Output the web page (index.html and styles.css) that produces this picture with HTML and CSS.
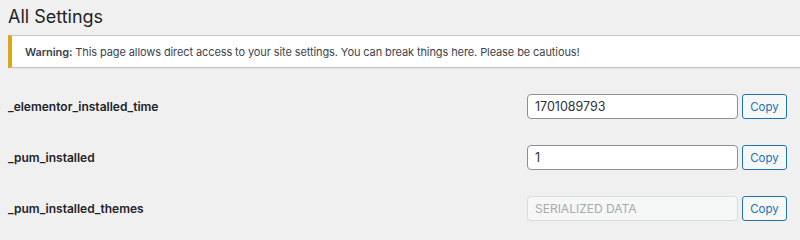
FILE: index.html
```html
<!DOCTYPE html>
<html>
<head>
<meta charset="utf-8">
<link rel="stylesheet" href="styles.css">
</head>
<body>
<div class="wrap">
  <h1 class="title">All Settings</h1>
  <div class="notice"><p><strong>Warning:</strong> This page allows direct access to your site settings. You can break things here. Please be cautious!</p></div>
  <div class="rows">
    <div class="row">
      <div class="label">_elementor_installed_time</div>
      <input class="field" type="text" value="1701089793">
      <button class="copy">Copy</button>
    </div>
    <div class="row">
      <div class="label">_pum_installed</div>
      <input class="field" type="text" value="1">
      <button class="copy">Copy</button>
    </div>
    <div class="row">
      <div class="label">_pum_installed_themes</div>
      <input class="field disabled" type="text" value="SERIALIZED DATA" disabled>
      <button class="copy">Copy</button>
    </div>
  </div>
</div>
</body>
</html>
```
FILE: styles.css
```css
html, body {
  margin: 0;
  padding: 0;
  background: #f0f0f1;
  overflow: hidden;
}
body {
  font-family: Inter, "Liberation Sans", sans-serif;
  color: #1d2327;
}
.wrap {
  padding: 0 0 0 8px;
}
.title {
  margin: 0;
  padding-top: 5px;
  font-size: 18px;
  font-weight: 400;
  line-height: 24px;
  color: #1d2327;
}
.notice {
  margin: 6px -20px 0 0;
  background: #fff;
  border: 1px solid #c3c4c7;
  border-left: 4px solid #dba617;
  box-shadow: 0 1px 1px rgba(0,0,0,.04);
  height: 31px;
  display: flex;
  align-items: center;
  padding-left: 13px;
}
.notice p {
  margin: 0;
  font-size: 11px;
  letter-spacing: -0.1px;
  color: #3c434a;
}
.notice strong {
  font-weight: 600;
}
.rows {
  padding-top: 26px;
  display: flex;
  flex-direction: column;
  gap: 26px;
}
.row {
  display: grid;
  grid-template-columns: 515px 211px 45px;
  column-gap: 4px;
  align-items: center;
  height: 25px;
}
.label {
  font-size: 12px;
  font-weight: 600;
  color: #1d2327;
}
.field {
  box-sizing: border-box;
  width: 211px;
  height: 25px;
  border: 1px solid #8c8f94;
  border-radius: 4px;
  background: #fff;
  font-family: Inter, "Liberation Sans", sans-serif;
  font-size: 12.5px;
  color: #2c3338;
  padding: 0 7px;
  margin: 0;
}
.field.disabled {
  background: #f6f7f7;
  border-color: #dcdcde;
  color: #a7aaad;
  font-size: 12px;
  box-shadow: none;
}
.copy {
  box-sizing: border-box;
  width: 45px;
  height: 25px;
  border: 1px solid #2271b1;
  border-radius: 3px;
  background: #f6f7f7;
  color: #2271b1;
  font-family: Inter, "Liberation Sans", sans-serif;
  font-size: 11.5px;
  padding: 0;
  margin: 0;
}
```
